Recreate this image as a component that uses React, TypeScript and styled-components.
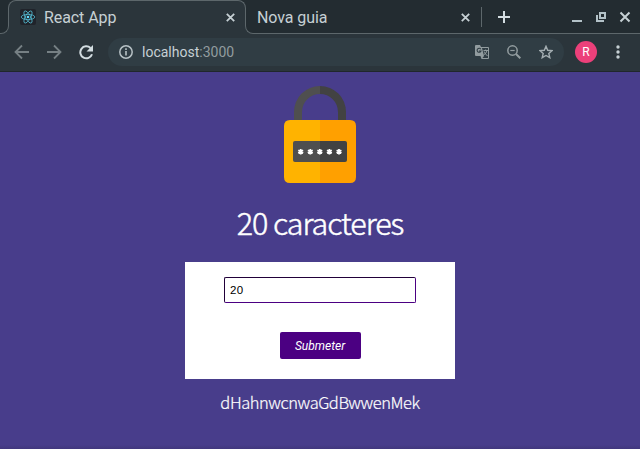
import React, { useState } from 'react';
import styled, { createGlobalStyle } from 'styled-components';

const GlobalStyle = createGlobalStyle`
  * { box-sizing: border-box; }
  body { margin: 0; overflow: hidden; font-family: Roboto, sans-serif; }
`;

const Window = styled.div`
  width: 640px;
  height: 449px;
  display: flex;
  flex-direction: column;
  background: #483d8b;
`;

const TabStrip = styled.div`
  height: 34px;
  display: flex;
  align-items: flex-end;
  background: linear-gradient(#232c31 20px, #2b353b 20px);
`;

const StripEdge = styled.div`
  width: 9px;
  height: 14px;
  margin-right: -1px;
  background: #232c31;
  border-bottom: 1px solid #5d676b;
  border-right: 1px solid #5d676b;
  border-bottom-right-radius: 8px;
`;

const ActiveTab = styled.div`
  position: relative;
  isolation: isolate;
  width: 238px;
  height: 34px;
  display: flex;
  align-items: center;
  padding: 0 10px 0 12px;

  &::before {
    content: '';
    position: absolute;
    z-index: -1;
    inset: 0 0 14px;
    border: 1px solid #5d676b;
    border-bottom: 0;
    border-radius: 8px 8px 0 0;
    background: #2b353b;
  }
`;

const TabTitle = styled.span`
  flex: 1;
  padding-top: 1px;
  font-size: 16px;
  line-height: 33px;
  letter-spacing: -0.08px;
  color: #c6d0d4;
  white-space: nowrap;
`;

const TabRest = styled.div`
  position: relative;
  isolation: isolate;
  flex: 1;
  height: 34px;
  display: flex;
  align-items: center;
  margin-left: -1px;
  padding-left: 12px;

  &::before {
    content: '';
    position: absolute;
    z-index: -1;
    inset: 20px 0 0;
    border-bottom: 1px solid #5d676b;
    border-left: 1px solid #5d676b;
    border-bottom-left-radius: 8px;
    background: #232c31;
  }
`;

const InactiveTab = styled.div`
  width: 213px;
  display: flex;
  align-items: center;
`;

const Separator = styled.i`
  width: 1px;
  height: 20px;
  margin-left: 11px;
  margin-right: 16px;
  background: #5d676b;
`;

const Icon = styled.svg<{ $gap?: number }>`
  display: block;
  flex: none;
  margin-right: ${(p) => p.$gap ?? 0}px;
`;

const Toolbar = styled.div`
  height: 38px;
  display: flex;
  align-items: center;
  padding: 0 0 2px 14px;
  background: #2b353b;
  border-bottom: 1px solid #20272b;
`;

const AddressBar = styled.div`
  width: 456px;
  height: 28px;
  display: flex;
  align-items: center;
  padding: 0 11px;
  margin: 1px 11px 0 14px;
  border-radius: 14px;
  background: #303d44;
`;

const Address = styled.span`
  flex: 1;
  font-size: 14px;
  color: #c6d0d4;
  span { color: #929c9f; }
`;

const Avatar = styled.div`
  width: 22px;
  height: 22px;
  margin-right: 19px;
  border-radius: 50%;
  background: #ec407a;
  color: #fff;
  font-size: 12px;
  line-height: 22px;
  text-align: center;
`;

const Page = styled.main`
  flex: 1;
  display: flex;
  flex-direction: column;
  align-items: center;
  padding-top: 14px;
  background: linear-gradient(to top, #41377d 0, #483d8b 4px);
  font-family: "Noto Sans CJK JP", sans-serif;
  font-weight: 300;
  color: #fff;
`;

const Heading = styled.h1`
  margin: 14px 0 0;
  height: 48px;
  font-size: 30.5px;
  line-height: 48px;
  font-weight: 300;
  letter-spacing: -1.05px;
  -webkit-text-stroke: 0.5px #fff;
`;

const Form = styled.form`
  width: 270px;
  height: 117px;
  margin-top: 16px;
  padding-top: 15px;
  display: flex;
  flex-direction: column;
  align-items: center;
  background: #fff;
`;

const LengthInput = styled.input`
  width: 192px;
  height: 26px;
  padding: 0 5px;
  border: 1px solid #4b0082;
  border-top-color: #210039;
  border-left-color: #210039;
  border-radius: 2px;
  outline: none;
  background: #fff;
  color: #000;
  font: 11.5px "Liberation Sans", sans-serif;
  letter-spacing: 0.4px;
`;

const SubmitButton = styled.button`
  width: 81px;
  height: 27px;
  margin-top: 29px;
  padding: 0;
  border: 0;
  border-radius: 2px;
  background: #4b0082;
  color: #fff;
  font: italic 12px Roboto, sans-serif;
`;

const Password = styled.p`
  margin: 10px 0 0;
  font-size: 16.5px;
  line-height: 26px;
  letter-spacing: -0.45px;
  -webkit-text-stroke: 0.2px #fff;
`;

const CloseIcon = ({ gap = 0 }: { gap?: number }) => (
  <Icon $gap={gap} width="9" height="9" viewBox="0 0 9 9" stroke="#c6d0d4" strokeWidth="1.8">
    <path d="M.8.8l7.4 7.4M8.2.8L.8 8.200" />
  </Icon>
);

const ReactLogo = () => (
  <Icon $gap={8} width="16" height="16" viewBox="0 0 16 16">
    <rect width="16" height="16" rx="2" fill="#20232a" />
    <g fill="none" stroke="#53b9d1" strokeWidth=".8">
      <ellipse cx="8" cy="8" rx="6.8" ry="2.6" />
      <ellipse cx="8" cy="8" rx="6.8" ry="2.6" transform="rotate(60 8 8)" />
      <ellipse cx="8" cy="8" rx="6.8" ry="2.6" transform="rotate(120 8 8)" />
    </g>
    <circle cx="8" cy="8" r="1.3" fill="#61dafb" />
  </Icon>
);

const WindowControls = () => (
  <Icon $gap={8} width="60" height="14" viewBox="0 0 60 14" fill="none" stroke="#b3c2c8" strokeWidth="2">
    <path d="M0 11h10" />
    <path d="M28 3h5v5h-5z" />
    <path d="M25 5v6h7" />
    <path d="M48.500 2.500l9 9M57.500 2.500l-9 9" stroke="#c6d0d4" />
  </Icon>
);

const Padlock = () => (
  <Icon width="72" height="98" viewBox="0 0 72 98">
    <path d="M10 42V26A26 26 0 0 1 36 0v8A18 18 0 0 0 18 26v16z" fill="#4f4f4f" />
    <path d="M62 42V26A26 26 0 0 0 36 0v8a18 18 0 0 1 18 18v16z" fill="#424242" />
    <path d="M36 34H6q-6 0-6 6v51q0 6 6 6h30z" fill="#ffb300" />
    <path d="M36 34h30q6 0 6 6v51q0 6-6 6H36z" fill="#ffa000" />
    <path d="M36 55H11q-2 0-2 2v17q0 2 2 2h25z" fill="#4f4f4f" />
    <path d="M36 55h25q2 0 2 2v17q0 2-2 2H36z" fill="#424242" />
    {[16.7, 26.3, 35.8, 45.4, 55].map((x) => (
      <path
        key={x}
        transform={`translate(${x} 65.7)`}
        d="M0-2.8v5.6M-2.4-1.4l4.8 2.8M-2.4 1.4l4.8-2.8"
        stroke="#fff"
        strokeWidth="1.8"
      />
    ))}
  </Icon>
);

export default function App() {
  const [length, setLength] = useState('20');

  return (
    <Window>
      <GlobalStyle />
      <TabStrip>
        <StripEdge />
        <ActiveTab>
          <ReactLogo />
          <TabTitle>React App</TabTitle>
          <CloseIcon gap={1} />
        </ActiveTab>
        <TabRest>
          <InactiveTab>
            <TabTitle>Nova guia</TabTitle>
            <CloseIcon />
          </InactiveTab>
          <Separator />
          <Icon width="12" height="12" stroke="#d3dde1" strokeWidth="2" $gap={62}>
            <path d="M6 0v12M0 6h12" />
          </Icon>
          <WindowControls />
        </TabRest>
      </TabStrip>

      <Toolbar>
        <Icon $gap={16} width="16" height="16" viewBox="0 0 16 16" fill="none" stroke="#768084" strokeWidth="1.8">
          <path d="M15 8H2M8 1.5L1.5 8 8 14.5" />
        </Icon>
        <Icon $gap={17} width="16" height="16" viewBox="0 0 16 16" fill="none" stroke="#768084" strokeWidth="1.8">
          <path d="M1 8h13M8 1.5L14.500 8 8 14.500" />
        </Icon>
        <Icon width="15" height="16" viewBox="0 0 15 16">
          <path d="M13 10.200A6 6 0 1 1 11.500 4" fill="none" stroke="#d3dde1" strokeWidth="2" />
          <path d="M14 1v6.500H7.500z" fill="#d3dde1" />
        </Icon>
        <AddressBar>
          <Icon $gap={9} width="14" height="14" viewBox="0 0 14 14">
            <circle cx="7" cy="7" r="6.2" fill="none" stroke="#b7c1c5" strokeWidth="1.500" />
            <path d="M7 6v4.500M7 3.300v1.600" stroke="#b7c1c5" strokeWidth="1.600" />
          </Icon>
          <Address>localhost<span>:3000</span></Address>
          <Icon $gap={18} width="14" height="14" viewBox="0 0 14 14">
            <path d="M1 0h4l1 2H13q1 0 1 1v10q0 1-1 1H6.500L5.500 11H1q-1 0-1-1V1q0-1 1-1z" fill="#929c9f" />
            <path d="M7 3h6v10H7.500l1.500-2z" fill="#303d44" />
            <path d="M5.800 4.200A2 2 0 1 0 6 6H4" fill="none" stroke="#303d44" strokeWidth="1.100" />
            <path d="M8.500 5.500H13M10.700 4.500v1M12 5.500q-.5 3-3.500 4.500M9.200 6.500q1 2.500 3.300 4.500" fill="none" stroke="#929c9f" strokeWidth="1" />
          </Icon>
          <Icon $gap={18} width="14" height="14" viewBox="0 0 14 14" fill="none" stroke="#929c9f">
            <circle cx="5.500" cy="5.500" r="4.700" strokeWidth="1.500" />
            <path d="M3.300 5.500h4.400" strokeWidth="1.200" />
            <path d="M9 9l4.300 4.300" strokeWidth="2" />
          </Icon>
          <Icon width="14" height="14" viewBox="0 0 14 14" fill="none" stroke="#a4aeb2" strokeWidth="1.400">
            <path d="M7 1.300l1.700 4 4.300.4-3.200 2.800 1 4.200L7 10.500l-3.800 2.200 1-4.200L1 5.700l4.300-.4z" />
          </Icon>
        </AddressBar>
        <Avatar>R</Avatar>
        <Icon width="4" height="14" viewBox="0 0 4 14" fill="#c6d0d4">
          <circle cx="2" cy="2" r="1.700" />
          <circle cx="2" cy="7" r="1.700" />
          <circle cx="2" cy="12" r="1.700" />
        </Icon>
      </Toolbar>

      <Page>
        <Padlock />
        <Heading>{length} caracteres</Heading>
        <Form onSubmit={(e) => e.preventDefault()}>
          <LengthInput value={length} onChange={(e) => setLength(e.target.value)} />
          <SubmitButton type="submit">Submeter</SubmitButton>
        </Form>
        <Password>dHahnwcnwaGdBwwenMek</Password>
      </Page>
    </Window>
  );
}
